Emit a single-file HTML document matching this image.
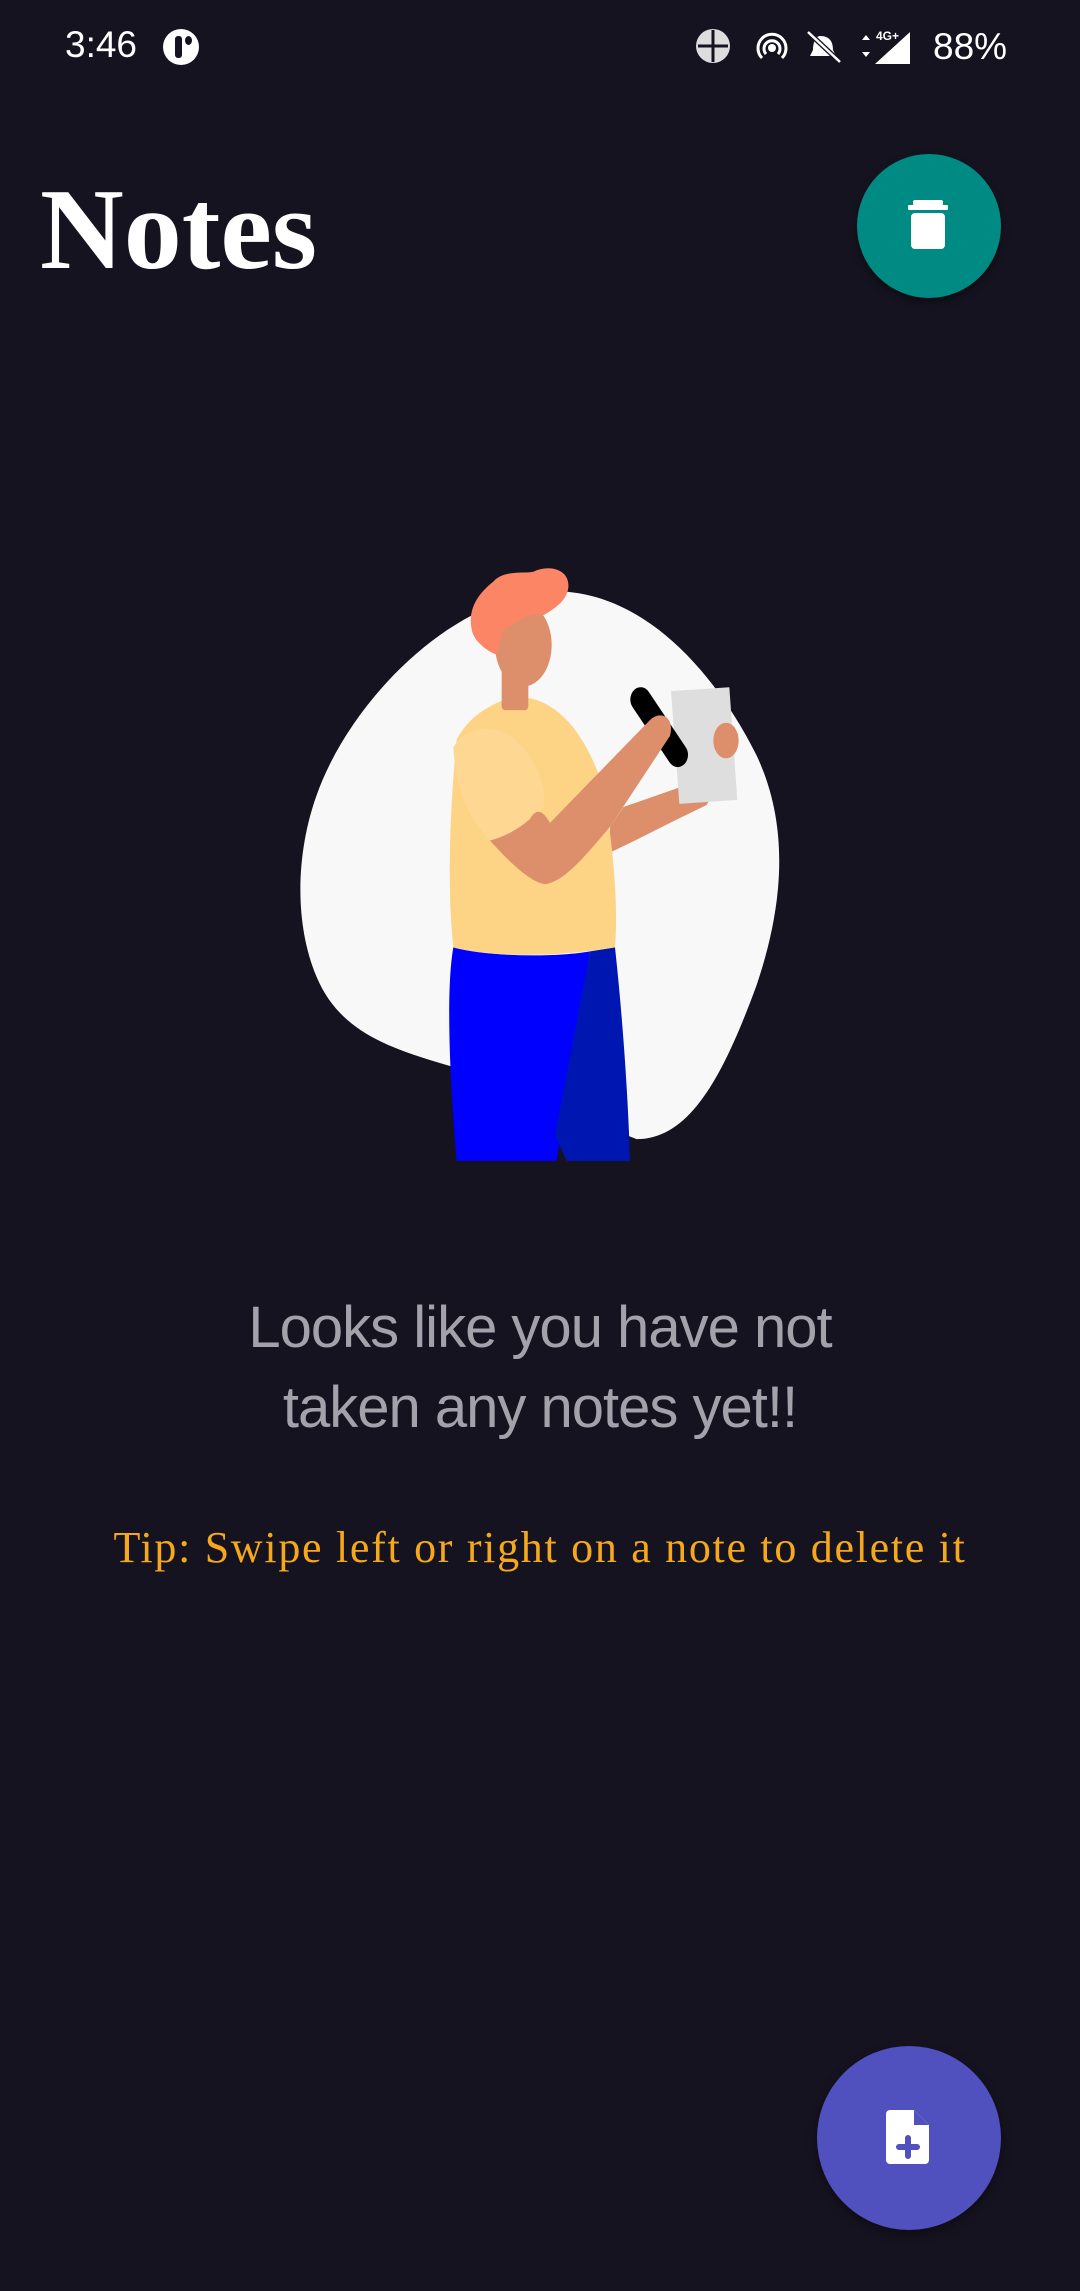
<!DOCTYPE html>
<html><head><meta charset="utf-8"><style>
html,body{margin:0;padding:0;}
body{width:1080px;height:2291px;background:#15131f;position:relative;overflow:hidden;font-family:"Liberation Sans",sans-serif;}
.abs{position:absolute;}
</style></head><body>
<div class="abs" style="left:65px;top:24px;font-size:37px;color:#fff;">3:46</div>
<div class="abs" style="left:163px;top:29px;width:36px;height:36px;border-radius:50%;background:#fff;"></div>
<div class="abs" style="left:175px;top:36px;width:7px;height:22px;background:#15131f;border-radius:3px;"></div>
<div class="abs" style="left:185px;top:36px;width:7px;height:9px;background:#15131f;border-radius:50%;"></div>
<svg class="abs" style="left:690px;top:26px" width="330" height="40" viewBox="0 0 330 40">
 <circle cx="23" cy="20" r="17" fill="#ddd"/><path d="M23 4 V36 M8 20 H38" stroke="#15131f" stroke-width="3"/>
 <circle cx="82" cy="22" r="4" fill="#fff"/><path d="M72 32 A14 14 0 1 1 92 32 M76 28 A8 8 0 1 1 88 28" stroke="#fff" stroke-width="3" fill="none"/>
 <path d="M130 10 C140 10 143 16 143 24 L146 30 H120 L123 24 C123 16 126 10 130 10Z" fill="#fff"/><path d="M118 6 L150 36" stroke="#15131f" stroke-width="5"/><path d="M118 6 L150 36" stroke="#fff" stroke-width="2.5"/>
 <path d="M172 14 l4 -5 l4 5Z M172 26 l4 5 l4 -5Z" fill="#fff"/><path d="M185 38 L220 6 V38Z" fill="#fff"/><text x="186" y="14" font-size="12" fill="#fff" font-weight="bold">4G+</text>
 <text x="243" y="33" font-size="37" fill="#fff" font-family="Liberation Sans">88%</text>
</svg>
<div class="abs" style="left:40px;top:172px;font-family:'Liberation Serif',serif;font-weight:bold;font-size:116px;color:#fff;line-height:1;">Notes</div>
<div class="abs" style="left:857px;top:154px;width:144px;height:144px;border-radius:50%;background:#008a84;box-shadow:0 4px 8px rgba(0,0,0,.4);"></div>
<svg class="abs" style="left:905px;top:200px" width="46" height="52" viewBox="0 0 46 52"><rect x="8" y="0" width="30" height="6" rx="2" fill="#fff"/><rect x="3" y="5" width="40" height="5" rx="1" fill="#fff"/><rect x="6" y="13" width="34" height="36" rx="4" fill="#fff"/></svg>
<svg class="abs" style="left:290px;top:550px" width="500" height="620" viewBox="0 0 1500 1568" preserveAspectRatio="none">
 <path d="M820 105 C1100 120 1300 350 1400 520 C1500 700 1480 900 1400 1100 C1300 1330 1200 1490 1040 1490 L480 1305 C300 1260 150 1220 80 1080 C10 940 20 760 80 620 C180 380 500 100 820 105Z" fill="#f8f8f8"/>
 <path d="M490 1005 C600 1030 800 1030 900 1015 L800 1545 L500 1545 C475 1300 470 1100 490 1005Z" fill="#0000ff"/>
 <path d="M900 1015 L975 1005 C1000 1200 1015 1400 1020 1545 L830 1545 L795 1480Z" fill="#0016b0"/>
 <path d="M960 700 L1000 650 L1170 600 L1260 630 L1250 645 C1150 685 1050 730 960 765Z" fill="#dc8f6a"/>
 <path d="M490 1005 C470 850 480 650 500 480 C530 430 580 400 640 380 L720 375 C800 390 880 450 940 600 C970 750 985 900 975 1005 C800 1030 600 1030 490 1005Z" fill="#fdd385"/>
 <path d="M490 500 C520 450 600 440 660 470 C740 520 770 600 760 650 C700 700 640 730 600 735 C540 680 500 620 490 500Z" fill="#fed893"/>
 <rect x="635" y="290" width="80" height="115" rx="10" fill="#dc8f6a"/>
 <ellipse cx="700" cy="240" rx="85" ry="105" fill="#dc8f6a"/>
 <path d="M545 200 C530 140 580 100 610 80 C640 50 700 60 730 55 C780 35 840 50 835 95 C830 130 790 150 760 165 C720 150 680 190 640 200 L620 265 C590 255 550 230 545 200Z" fill="#fc8566"/>
 <path d="M1143 357 L1318 347 L1342 632 L1168 642Z" fill="#dedede"/>
 <line x1="1052" y1="378" x2="1163" y2="518" stroke="#000" stroke-width="62" stroke-linecap="round"/>
 <path d="M600 735 C660 790 720 840 765 845 C820 840 880 780 960 700 L1140 470 C1155 420 1110 405 1080 430 L780 690 C760 660 740 650 720 680 C680 710 640 725 600 735Z" fill="#dc8f6a"/>
 <ellipse cx="1308" cy="482" rx="38" ry="45" fill="#dc8f6a"/>
</svg>
<div class="abs" style="left:0;width:1080px;top:1288px;text-align:center;font-size:58px;line-height:80px;color:#a3a2ab;letter-spacing:-1px;">Looks like you have not<br>taken any notes yet!!</div>
<div class="abs" style="left:0;width:1080px;top:1522px;text-align:center;font-family:'Liberation Serif',serif;font-size:44px;letter-spacing:1.7px;color:#f5a81c;">Tip: Swipe left or right on a note to delete it</div>
<div class="abs" style="left:817px;top:2046px;width:184px;height:184px;border-radius:50%;background:#5050bf;box-shadow:0 4px 10px rgba(0,0,0,.4);"></div>
<svg class="abs" style="left:886px;top:2110px" width="44" height="54" viewBox="0 0 44 54"><path d="M4 0 H28 L43 15 V50 A4 4 0 0 1 39 54 H4 A4 4 0 0 1 0 50 V4 A4 4 0 0 1 4 0Z" fill="#fff"/><path d="M28 0 V15 H43Z" fill="#5050bf"/><path d="M22 28 V46 M13 37 H31" stroke="#5050bf" stroke-width="6" stroke-linecap="round"/></svg>
</body></html>
